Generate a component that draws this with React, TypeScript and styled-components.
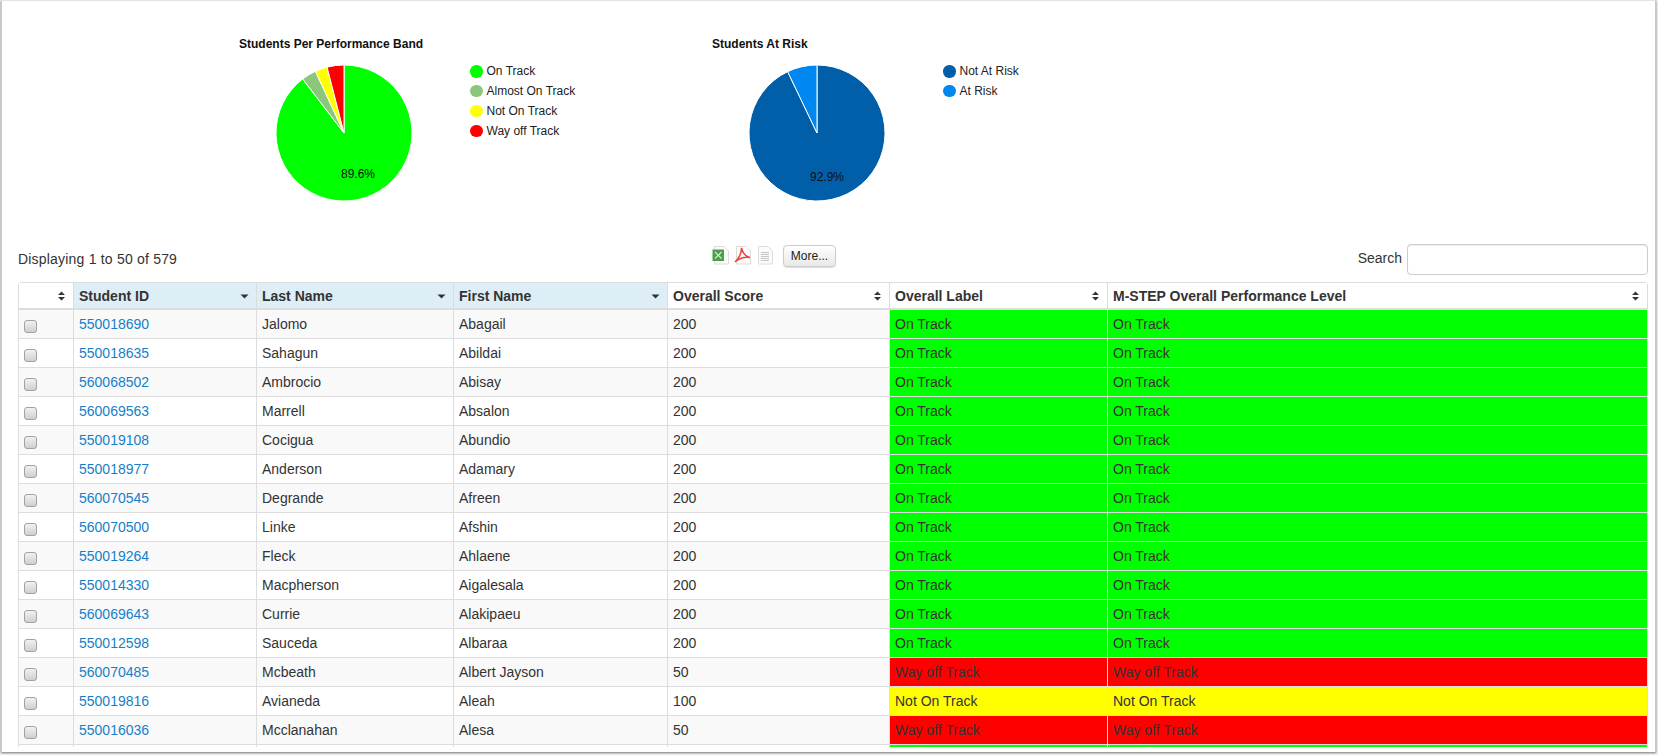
import styled, { createGlobalStyle } from 'styled-components';

const GlobalStyle = createGlobalStyle`
    html, body {
        margin: 0;
        height: 100%;
        overflow: hidden;
        background: #f1f1f1;
        font-family: 'Liberation Sans', Arial, sans-serif;
    }
`;

const Frame = styled.div`
    box-sizing: border-box;
    width: 1655px;
    height: 752px;
    margin-left: 1px;
    padding: 0 7px 5px 16px;
    display: flex;
    flex-direction: column;
    background: #fff;
    border-left: 1px solid #c8c8c8;
    border-right: 1px solid #c8c8c8;
    border-top: 1px solid #e4e4e4;
    box-shadow: 0 1px 2px #777;
`;
const ChartRow = styled.section`
    display: flex;
    height: 243px;
    padding: 36px 0 0 221px;
    box-sizing: border-box;
`;
const ChartCard = styled.div`
    width: 473px;
`;
const ChartTitle = styled.h3`
    margin: 0 0 13px;
    font-size: 12px;
    line-height: 14px;
    font-weight: bold;
    color: #111;
`;
const ChartBody = styled.div`
    display: flex;
    align-items: flex-start;
    padding-left: 36px;
    gap: 57px;
`;
const PieSvg = styled.svg`
    display: block;
    width: 138px;
    height: 138px;
`;
const PieLabel = styled.text`
    font-size: 12px;
    fill: #111;
    text-anchor: middle;
`;
const Legend = styled.ul`
    list-style: none;
    margin: -2.5px 0 0;
    padding: 0;
`;
const LegendItem = styled.li`
    display: flex;
    align-items: center;
    gap: 4px;
    height: 19.8px;
    font-size: 12px;
    color: #222;
`;
const LegendDot = styled.span<{ $color: string }>`
    width: 12.5px;
    height: 12.5px;
    border-radius: 50%;
    background: ${p => p.$color};
`;

const Toolbar = styled.div`
    display: grid;
    grid-template-columns: 694px auto 1fr;
    height: 38px;
`;
const Count = styled.div`
    font-size: 14px;
    line-height: 20px;
    letter-spacing: 0.2px;
    color: #333;
    padding-top: 5px;
`;
const ExportGroup = styled.div`
    display: flex;
    align-items: flex-start;
    padding-top: 1px;
    gap: 4px;
`;
const FileIcon = styled.svg`
    display: block;
    width: 18px;
    height: 19px;
    margin-top: 1px;
`;
const MoreButton = styled.button`
    margin-left: 5px;
    width: 53px;
    height: 22px;
    padding: 0;
    font: 12px 'Liberation Sans', Arial, sans-serif;
    color: #222;
    background: linear-gradient(#fff, #e8e8e8);
    border: 1px solid #ccc;
    border-radius: 4px;
    box-shadow: 0 1px 1px #ddd;
`;
const SearchBox = styled.label`
    display: flex;
    justify-content: flex-end;
    align-items: flex-start;
    gap: 5px;
    font-size: 14px;
    line-height: 29px;
    color: #333;
`;
const SearchInput = styled.input`
    box-sizing: border-box;
    width: 241px;
    height: 31px;
    border: 1px solid #ccc;
    border-radius: 4px;
    background: #fff;
    box-shadow: inset 0 1px 1px rgba(0, 0, 0, 0.075);
`;

const TableClip = styled.div`
    flex: 1;
    min-height: 0;
    overflow: hidden;
`;
const Table = styled.table`
    width: 1630px;
    table-layout: fixed;
    border-collapse: separate;
    border-spacing: 0;
    font-size: 14px;
    color: #333;
    border-top: 1px solid #ddd;
    border-left: 1px solid #ddd;
    border-right: 1px solid #ddd;
    border-radius: 4px 4px 0 0;
`;
const HeadCell = styled.th<{ $sorted?: boolean }>`
    height: 27px;
    padding: 0 5px;
    box-sizing: border-box;
    text-align: left;
    font-weight: bold;
    background: ${p => (p.$sorted ? '#deeef6' : '#fff')};
    border-left: 1px solid #ddd;
    border-bottom: 2px solid #ddd;
    &:first-child {
        border-left: 0;
    }
`;
const HeadInner = styled.div`
    display: flex;
    justify-content: space-between;
    align-items: center;
    padding-right: 2px;
`;
const SortSvg = styled.svg`
    display: block;
    width: 9px;
    height: 10px;
`;
const Row = styled.tr<{ $odd: boolean }>`
    background: ${p => (p.$odd ? '#f9f9f9' : '#fff')};
`;
const Cell = styled.td<{ $band?: string }>`
    height: 29px;
    padding: 0 5px;
    box-sizing: border-box;
    border-left: 1px solid #ddd;
    border-bottom: 1px solid #ddd;
    background: ${p => p.$band ?? 'transparent'};
    &:first-child {
        border-left: 0;
    }
`;
const StudentLink = styled.a`
    color: #1580c8;
    text-decoration: none;
`;
const RowCheck = styled.span`
    display: block;
    box-sizing: border-box;
    width: 13px;
    height: 13px;
    margin-top: 4px;
    border: 1px solid #a2a2a2;
    border-radius: 3px;
    background: linear-gradient(#f1f1f1, #cfcfcf);
`;

const BAND_COLOR: Record<string, string> = {
    'On Track': '#00ff00',
    'Almost On Track': '#8bc77a',
    'Not On Track': '#ffff00',
    'Way off Track': '#ff0000',
};

type Slice = { pct: number; color: string };

// slices run clockwise from 12 o'clock
function slicePaths(slices: Slice[], r: number) {
    let start = 0;
    return slices.map(s => {
        const end = start + s.pct / 100;
        const a0 = start * 2 * Math.PI;
        const a1 = end * 2 * Math.PI;
        const large = s.pct > 50 ? 1 : 0;
        const d = `M${r + 1} ${r + 1}L${r + 1 + r * Math.sin(a0)} ${r + 1 - r * Math.cos(a0)}A${r} ${r} 0 ${large} 1 ${r + 1 + r * Math.sin(a1)} ${r + 1 - r * Math.cos(a1)}Z`;
        start = end;
        return { d, color: s.color };
    });
}

const charts = [
    {
        title: 'Students Per Performance Band',
        label: '89.6%',
        labelX: 83,
        labelY: 114,
        slices: [
            { pct: 89.6, color: '#00ff00' },
            { pct: 3.5, color: '#8bc77a' },
            { pct: 2.9, color: '#ffff00' },
            { pct: 4.0, color: '#ff0000' },
        ],
        legend: [
            ['On Track', '#00ff00'],
            ['Almost On Track', '#8bc77a'],
            ['Not On Track', '#ffff00'],
            ['Way off Track', '#ff0000'],
        ],
    },
    {
        title: 'Students At Risk',
        label: '92.9%',
        labelX: 79,
        labelY: 117,
        slices: [
            { pct: 92.9, color: '#005fa8' },
            { pct: 7.1, color: '#0088f0' },
        ],
        legend: [
            ['Not At Risk', '#005fa8'],
            ['At Risk', '#0088f0'],
        ],
    },
];

const students: [string, string, string, number, string][] = [
    ['550018690', 'Jalomo', 'Abagail', 200, 'On Track'],
    ['550018635', 'Sahagun', 'Abildai', 200, 'On Track'],
    ['560068502', 'Ambrocio', 'Abisay', 200, 'On Track'],
    ['560069563', 'Marrell', 'Absalon', 200, 'On Track'],
    ['550019108', 'Cocigua', 'Abundio', 200, 'On Track'],
    ['550018977', 'Anderson', 'Adamary', 200, 'On Track'],
    ['560070545', 'Degrande', 'Afreen', 200, 'On Track'],
    ['560070500', 'Linke', 'Afshin', 200, 'On Track'],
    ['550019264', 'Fleck', 'Ahlaene', 200, 'On Track'],
    ['550014330', 'Macpherson', 'Aigalesala', 200, 'On Track'],
    ['560069643', 'Currie', 'Alakipaeu', 200, 'On Track'],
    ['550012598', 'Sauceda', 'Albaraa', 200, 'On Track'],
    ['560070485', 'Mcbeath', 'Albert Jayson', 50, 'Way off Track'],
    ['550019816', 'Avianeda', 'Aleah', 100, 'Not On Track'],
    ['550016036', 'Mcclanahan', 'Alesa', 50, 'Way off Track'],
];

const columns: { name: string; width: number; sorted?: boolean }[] = [
    { name: '', width: 54 },
    { name: 'Student ID', width: 183, sorted: true },
    { name: 'Last Name', width: 197, sorted: true },
    { name: 'First Name', width: 214, sorted: true },
    { name: 'Overall Score', width: 222 },
    { name: 'Overall Label', width: 218 },
    { name: 'M-STEP Overall Performance Level', width: 540 },
];

function SortIcon({ sorted }: { sorted?: boolean }) {
    return (
        <SortSvg viewBox="0 0 9 10">
            {sorted ? (
                <path d="M0.5 3.5h8L4.5 7.5z" fill="#333" />
            ) : (
                <path d="M4.5 0.5L8 4H1zM4.5 9.5L8 6H1z" fill="#333" />
            )}
        </SortSvg>
    );
}

function PageShape() {
    return <path d="M2.500 0.500H12l4.500 4.500V18H2.500z" fill="#fbfbfb" stroke="#dcdcdc" />;
}

export default function App() {
    return (
        <>
            <GlobalStyle />
            <Frame>
                <ChartRow>
                    {charts.map(c => (
                        <ChartCard key={c.title}>
                            <ChartTitle>{c.title}</ChartTitle>
                            <ChartBody>
                                <PieSvg viewBox="0 0 138 138">
                                    {slicePaths(c.slices, 68).map(p => (
                                        <path key={p.color} d={p.d} fill={p.color} stroke="#fff" strokeWidth="1" />
                                    ))}
                                    <PieLabel x={c.labelX} y={c.labelY}>{c.label}</PieLabel>
                                </PieSvg>
                                <Legend>
                                    {c.legend.map(([name, color]) => (
                                        <LegendItem key={name}>
                                            <LegendDot $color={color} />
                                            {name}
                                        </LegendItem>
                                    ))}
                                </Legend>
                            </ChartBody>
                        </ChartCard>
                    ))}
                </ChartRow>
                <Toolbar>
                    <Count>Displaying 1 to 50 of 579</Count>
                    <ExportGroup>
                        <FileIcon viewBox="0 0 18 19">
                            <PageShape />
                            <rect x="0.500" y="3.500" width="11.500" height="11.500" fill="#4a9e4e" />
                            <path d="M3 6l6.500 6.500M9.500 6L3 12.500" stroke="#d5ecd6" strokeWidth="1.200" />
                        </FileIcon>
                        <FileIcon viewBox="0 0 18 19">
                            <PageShape />
                            <path d="M7.500 2C7.500 6 6 11.500 1 16 5 12.500 10 10.500 16 11.500 11 10.500 8.500 6 7.500 2z" fill="none" stroke="#e8433e" strokeWidth="1.500" />
                        </FileIcon>
                        <FileIcon viewBox="0 0 18 19">
                            <PageShape />
                            <path d="M5 6.500h8M5 8.500h8M5 10.500h8M5 12.500h8M5 14.500h8" stroke="#c4c4c4" />
                        </FileIcon>
                        <MoreButton>More...</MoreButton>
                    </ExportGroup>
                    <SearchBox>
                        Search
                        <SearchInput />
                    </SearchBox>
                </Toolbar>
                <TableClip>
                    <Table>
                        <colgroup>
                            {columns.map(c => (
                                <col key={c.name} width={c.width} />
                            ))}
                        </colgroup>
                        <thead>
                            <tr>
                                {columns.map(c => (
                                    <HeadCell key={c.name} $sorted={c.sorted}>
                                        <HeadInner>
                                            <span>{c.name}</span>
                                            <SortIcon sorted={c.sorted} />
                                        </HeadInner>
                                    </HeadCell>
                                ))}
                            </tr>
                        </thead>
                        <tbody>
                            {students.map(([id, last, first, score, band], i) => (
                                <Row key={id} $odd={i % 2 === 0}>
                                    <Cell><RowCheck /></Cell>
                                    <Cell><StudentLink href="#">{id}</StudentLink></Cell>
                                    <Cell>{last}</Cell>
                                    <Cell>{first}</Cell>
                                    <Cell>{score}</Cell>
                                    <Cell $band={BAND_COLOR[band]}>{band}</Cell>
                                    <Cell $band={BAND_COLOR[band]}>{band}</Cell>
                                </Row>
                            ))}
                            {/* next row is cut by the frame, only its colour shows */}
                            <Row $odd={false}>
                                <Cell />
                                <Cell />
                                <Cell />
                                <Cell />
                                <Cell />
                                <Cell $band={BAND_COLOR['On Track']} />
                                <Cell $band={BAND_COLOR['On Track']} />
                            </Row>
                        </tbody>
                    </Table>
                </TableClip>
            </Frame>
        </>
    );
}
